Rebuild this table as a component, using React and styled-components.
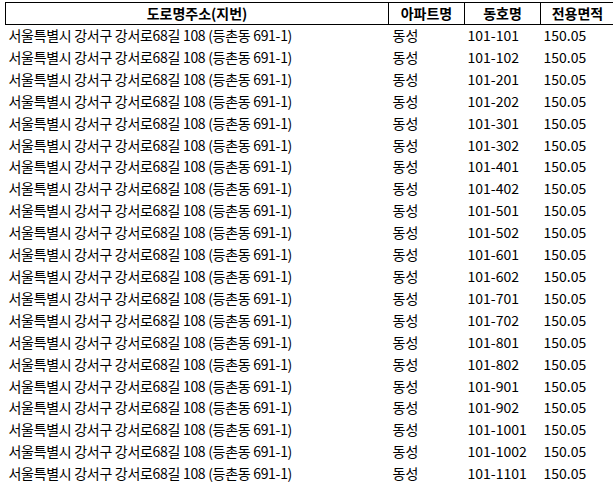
import React from 'react';
import styled, { createGlobalStyle } from 'styled-components';

const GlobalStyle = createGlobalStyle`
  body {
    margin: 0;
    background: #ffffff;
    font-family: "Noto Sans CJK KR", "Noto Sans", sans-serif;
    color: #000;
  }
`;

const Page = styled.div`
  padding: 2px 3px 0 5px;
`;

const Table = styled.table`
  border-collapse: collapse;
  table-layout: fixed;
  width: 605px;
  font-size: 14px;
`;

const HeadCell = styled.th`
  border: 1px solid #000;
  height: 21px;
  padding: 0;
  font-weight: 600;
  font-size: 14px;
  text-align: center;
  line-height: 21px;
  width: ${props => props.w}px;
`;

const Cell = styled.td`
  height: 21.9px;
  padding: 0 0 0 ${props => props.pad || 3}px;
  line-height: 21.9px;
  letter-spacing: ${props => props.ls || 0}px;
  white-space: nowrap;
  overflow: hidden;
`;

const units = [
  '101-101', '101-102', '101-201', '101-202', '101-301', '101-302',
  '101-401', '101-402', '101-501', '101-502', '101-601', '101-602',
  '101-701', '101-702', '101-801', '101-802', '101-901', '101-902',
  '101-1001', '101-1002', '101-1101',
];

const rows = units.map(unit => ({
  address: '서울특별시 강서구 강서로68길 108 (등촌동 691-1)',
  apt: '동성',
  unit,
  area: '150.05',
}));

export default function App() {
  return (
    <Page>
      <GlobalStyle />
      <Table>
        <thead>
          <tr>
            <HeadCell w={382}>도로명주소(지번)</HeadCell>
            <HeadCell w={75}>아파트명</HeadCell>
            <HeadCell w={75}>동호명</HeadCell>
            <HeadCell w={73}>전용면적</HeadCell>
          </tr>
        </thead>
        <tbody>
          {rows.map(r => (
            <tr key={r.unit}>
              <Cell ls={-0.3}>{r.address}</Cell>
              <Cell pad={4}>{r.apt}</Cell>
              <Cell pad={3}>{r.unit}</Cell>
              <Cell pad={3}>{r.area}</Cell>
            </tr>
          ))}
        </tbody>
      </Table>
    </Page>
  );
}
